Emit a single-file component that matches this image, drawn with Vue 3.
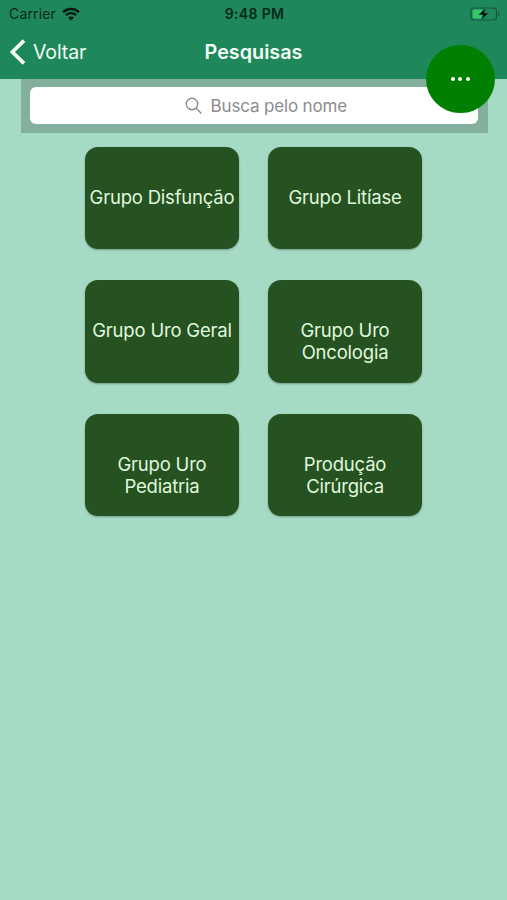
<template>
  <div class="screen">
    <header class="header">
      <div class="status-bar">
        <div class="carrier">
          <span class="carrier-name">Carrier</span>
          <svg class="wifi" width="18" height="14" viewBox="0 0 18 14">
            <path d="M1 5.1C5.6.9 12.4.9 17 5.1" />
            <path d="M3.8 8.1c3-2.7 7.4-2.7 10.4 0" />
            <path class="wifi-dot" d="M9 13.6L5.9 10.5c1.8-1.5 4.4-1.5 6.2 0z" />
          </svg>
        </div>
        <span class="time">9:48 PM</span>
        <svg class="battery" width="30" height="14" viewBox="0 0 30 14">
          <rect class="battery-shell" x="1" y="1" width="25.5" height="12" rx="3.2" />
          <path class="battery-tip" d="M28 4.8c1.8.8 1.8 3.6 0 4.4z" />
          <rect class="battery-level" x="2.6" y="2.6" width="11" height="8.8" rx="1.6" />
          <path class="battery-bolt" d="M15.8 1L8.6 7.8h4.3L11.2 13l7.2-6.9h-4.3z" />
        </svg>
      </div>
      <nav class="nav-bar">
        <button class="back">
          <svg width="16" height="26" viewBox="0 0 16 26">
            <path d="M14 1.6L2.4 13 14 24.4" />
          </svg>
          <span>Voltar</span>
        </button>
        <h1 class="title">Pesquisas</h1>
      </nav>
    </header>

    <div class="search-wrap">
      <label class="search">
        <svg v-if="!busca" width="18" height="18" viewBox="0 0 18 18">
          <circle cx="7" cy="7" r="5.7" />
          <path d="M11.2 11.2l5.2 5.2" />
        </svg>
        <input v-model="busca" type="text" placeholder="Busca pelo nome" />
      </label>
    </div>

    <main class="grid">
      <button v-for="grupo in gruposFiltrados" :key="grupo" class="card">{{ grupo }}</button>
    </main>

    <button class="fab">
      <i></i>
      <i></i>
      <i></i>
    </button>
  </div>
</template>

<script setup>
import { computed, ref } from 'vue'

const busca = ref('')

const grupos = [
  'Grupo Disfunção',
  'Grupo Litíase',
  'Grupo Uro Geral',
  'Grupo Uro Oncologia',
  'Grupo Uro Pediatria',
  'Produção Cirúrgica'
]

const gruposFiltrados = computed(() =>
  grupos.filter((g) => g.toLowerCase().includes(busca.value.toLowerCase()))
)
</script>

<style>
body {
  margin: 0;
}
</style>

<style scoped>
.screen {
  position: relative;
  min-height: 100vh;
  background-color: #a5dac4;
  font-family: Inter, "Liberation Sans", sans-serif;
}

button {
  border: none;
  padding: 0;
  background: none;
  font-family: inherit;
  cursor: pointer;
}

.header {
  height: 79px;
  background-color: #1f885b;
}

.status-bar {
  display: grid;
  grid-template-columns: 1fr auto 1fr;
  align-items: center;
  height: 27px;
  padding: 0 7px 0 9px;
  color: #06291a;
}

.carrier {
  display: flex;
  align-items: center;
  gap: 6px;
  font-size: 14px;
  letter-spacing: 0.15px;
}

.wifi path {
  fill: none;
  stroke: #031a10;
  stroke-width: 2.4;
}

.wifi .wifi-dot {
  fill: #031a10;
  stroke: none;
}

.time {
  font-size: 14px;
  font-weight: 600;
  letter-spacing: 0.35px;
}

.battery {
  justify-self: end;
}

.battery-shell {
  fill: none;
  stroke: #14583a;
  stroke-width: 1.2;
}

.battery-tip {
  fill: #14583a;
}

.battery-level {
  fill: #35c768;
}

.battery-bolt {
  fill: #000;
  stroke: #1f885b;
  stroke-width: 0.6;
}

.nav-bar {
  display: grid;
  grid-template-columns: 1fr auto 1fr;
  align-items: center;
  height: 49px;
  padding: 0 10px;
  color: #f2fff5;
}

.back {
  display: flex;
  align-items: center;
  gap: 7px;
  color: inherit;
  font-size: 19.5px;
  letter-spacing: -0.1px;
}

.back path {
  fill: none;
  stroke: #f2fff5;
  stroke-width: 3.6;
}

.title {
  margin: 0;
  font-size: 19.8px;
  font-weight: 600;
}

.search-wrap {
  margin: 0 19px 0 21px;
  padding: 8px 10px 9px 9px;
  background-color: #83b09c;
}

.search {
  display: flex;
  align-items: center;
  justify-content: center;
  gap: 8px;
  box-sizing: border-box;
  height: 37px;
  padding-left: 27px;
  border-radius: 6px;
  background-color: #fff;
}

.search svg {
  fill: none;
  stroke: #8c8c8c;
  stroke-width: 1.4;
}

.search input {
  width: 140px;
  border: none;
  outline: none;
  padding: 0;
  background: none;
  color: #333;
  font-family: inherit;
  font-size: 17px;
  letter-spacing: -0.15px;
}

.search input::placeholder {
  color: #8c8c8c;
  opacity: 1;
}

.grid {
  display: grid;
  grid-template-columns: 154px 154px;
  justify-content: center;
  gap: 31px 29px;
  padding-top: 14px;
}

.card {
  display: flex;
  justify-content: center;
  box-sizing: border-box;
  height: 102.4px;
  padding: 39px 3px 0;
  border-radius: 13px;
  background-color: #255220;
  box-shadow: 0 1px 2px rgba(0, 0, 0, 0.3);
  color: #e0f8df;
  font-size: 18.5px;
  line-height: 22px;
  letter-spacing: -0.2px;
  text-align: center;
}

.fab {
  position: absolute;
  top: 44.5px;
  right: 12.5px;
  display: flex;
  align-items: center;
  justify-content: center;
  gap: 3.4px;
  width: 68.5px;
  height: 68.5px;
  border-radius: 50%;
  background-color: #008000;
}

.fab i {
  width: 4px;
  height: 4px;
  border-radius: 50%;
  background-color: #fff;
}
</style>
